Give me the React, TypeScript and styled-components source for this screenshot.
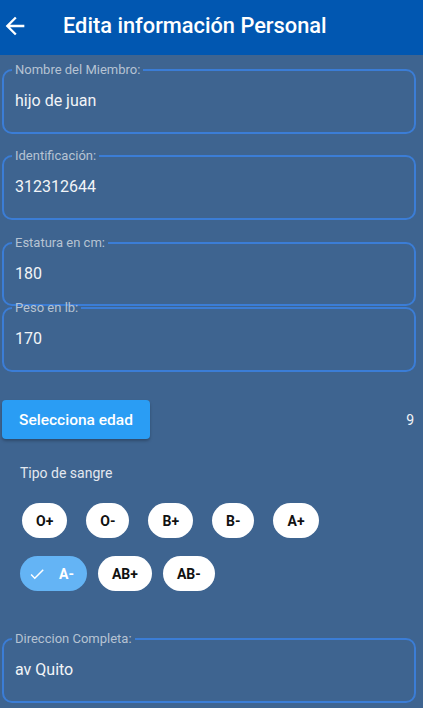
import React from 'react';
import styled, { createGlobalStyle } from 'styled-components';

const GlobalStyle = createGlobalStyle`
  html, body {
    margin: 0;
    padding: 0;
    background: #3e6490;
  }
  body {
    font-family: Roboto, "Liberation Sans", sans-serif;
  }
`;

const Screen = styled.div`
  width: 423px;
  height: 708px;
  overflow: hidden;
  background: #3e6490;
  display: flex;
  flex-direction: column;
`;

const AppBar = styled.header`
  height: 55px;
  box-sizing: border-box;
  padding: 0 0 4px 1px;
  flex-shrink: 0;
  background: #0157b1;
  display: flex;
  align-items: center;
  gap: 34px;
  color: #ffffff;
`;

const BackIcon = styled.svg`
  width: 28px;
  height: 28px;
  fill: #ffffff;
`;

const Title = styled.h1`
  margin: 0;
  font-size: 21.8px;
  font-weight: 500;
`;

const Form = styled.main`
  display: flex;
  flex-direction: column;
  padding: 0 7px 0 2px;
`;

const Field = styled.fieldset<{ $gap: number }>`
  margin: ${(p) => p.$gap}px 0 0 0;
  padding: 0 11px;
  min-width: 0;
  border: 2px solid #3b7dd6;
  border-radius: 10px;
`;

const Legend = styled.legend`
  padding: 0 3px;
  margin-left: -3px;
  font-size: 13px;
  line-height: 14px;
  color: #b6c3d3;
`;

const Value = styled.div<{ $h: number }>`
  height: ${(p) => p.$h}px;
  box-sizing: border-box;
  padding-top: 14px;
  font-size: 16px;
  line-height: 20px;
  color: #f2f4f7;
`;

const AgeRow = styled.div`
  margin-top: 28px;
  display: flex;
  align-items: center;
  justify-content: space-between;
  padding-right: 2px;
`;

const AgeButton = styled.button`
  height: 39px;
  width: 148px;
  padding: 0;
  border: none;
  border-radius: 4px;
  background: #2a9df4;
  color: #ffffff;
  font-family: inherit;
  font-size: 15.5px;
  font-weight: 500;
  box-shadow: 0 2px 3px rgba(0, 0, 0, 0.25);
`;

const AgeValue = styled.span`
  font-size: 14px;
  color: #f2f4f7;
`;

const SectionLabel = styled.div`
  margin-top: 24px;
  padding-left: 18px;
  font-size: 14px;
  line-height: 20px;
  color: #e3e8ef;
`;

const ChipRow = styled.div<{ $gap: number; $top: number; $left: number }>`
  display: flex;
  gap: ${(p) => p.$gap}px;
  margin-top: ${(p) => p.$top}px;
  padding-left: ${(p) => p.$left}px;
`;

const Chip = styled.div<{ $selected?: boolean }>`
  height: 35px;
  display: flex;
  align-items: center;
  gap: 13px;
  padding: 0 ${(p) => (p.$selected ? '13px 0 8px' : '14px')};
  border-radius: 18px;
  background: ${(p) => (p.$selected ? '#64b4f5' : '#ffffff')};
  color: ${(p) => (p.$selected ? '#ffffff' : '#111111')};
  font-size: 14px;
  font-weight: 700;
`;

const CheckIcon = styled.svg`
  width: 18px;
  height: 18px;
  fill: #ffffff;
`;

const bloodTypes = [
  ['O+', 'O-', 'B+', 'B-', 'A+'],
  ['A-', 'AB+', 'AB-'],
];

function App() {
  return (
    <Screen>
      <GlobalStyle />
      <AppBar>
        <BackIcon viewBox="0 0 24 24">
          <path d="M20 11H7.83l5.59-5.59L12 4l-8 8 8 8 1.41-1.41L7.83 13H20v-2z" />
        </BackIcon>
        <Title>Edita información Personal</Title>
      </AppBar>
      <Form>
        <Field $gap={8}>
          <Legend>Nombre del Miembro:</Legend>
          <Value $h={55}>hijo de juan</Value>
        </Field>
        <Field $gap={15}>
          <Legend>Identificación:</Legend>
          <Value $h={55}>312312644</Value>
        </Field>
        <Field $gap={16}>
          <Legend>Estatura en cm:</Legend>
          <Value $h={54}>180</Value>
        </Field>
        <Field $gap={-5}>
          <Legend>Peso en lb:</Legend>
          <Value $h={55}>170</Value>
        </Field>
        <AgeRow>
          <AgeButton>Selecciona edad</AgeButton>
          <AgeValue>9</AgeValue>
        </AgeRow>
        <SectionLabel>Tipo de sangre</SectionLabel>
        <ChipRow $gap={19} $top={20} $left={20}>
          {bloodTypes[0].map((t) => (
            <Chip key={t}>{t}</Chip>
          ))}
        </ChipRow>
        <ChipRow $gap={11} $top={18} $left={18}>
          {bloodTypes[1].map((t) =>
            t === 'A-' ? (
              <Chip key={t} $selected>
                <CheckIcon viewBox="0 0 24 24">
                  <path d="M9 16.17L4.83 12l-1.42 1.41L9 19 21 7l-1.41-1.41z" />
                </CheckIcon>
                {t}
              </Chip>
            ) : (
              <Chip key={t}>{t}</Chip>
            )
          )}
        </ChipRow>
        <Field $gap={41}>
          <Legend>Direccion Completa:</Legend>
          <Value $h={55}>av Quito</Value>
        </Field>
      </Form>
    </Screen>
  );
}

export default App;
